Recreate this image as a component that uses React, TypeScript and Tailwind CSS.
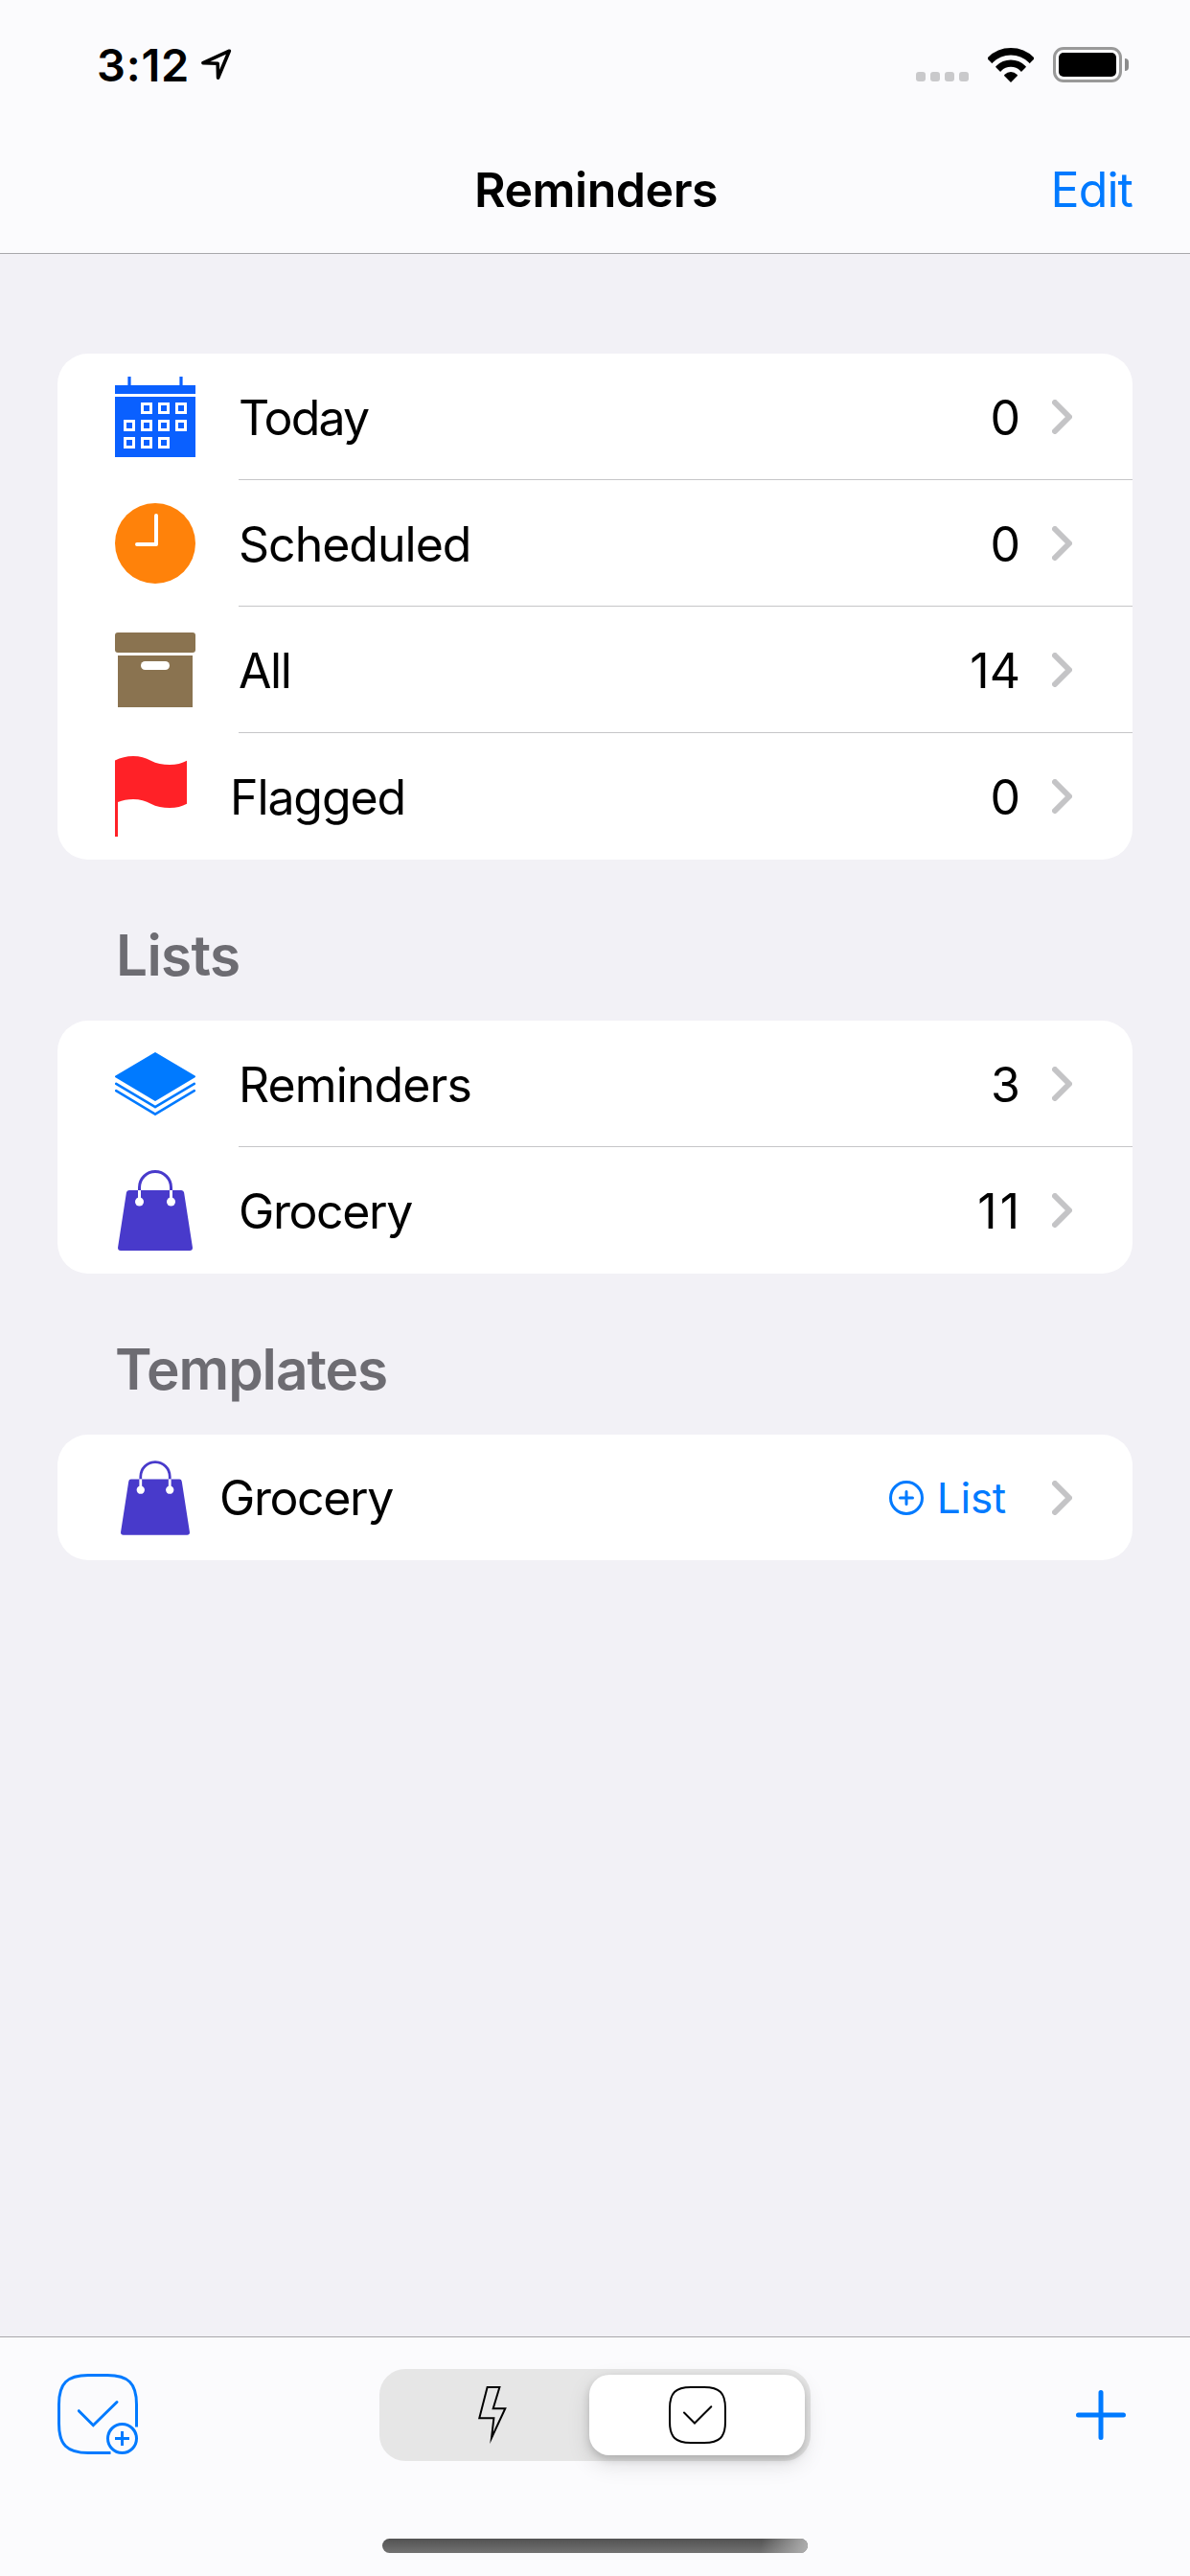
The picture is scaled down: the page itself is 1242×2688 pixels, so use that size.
import React from "react";
import type { ReactNode } from "react";

const CalendarIcon = () => {
  const days: [number, number][] = [
    [27, 27], [45, 27], [63, 27],
    [9, 45], [27, 45], [45, 45], [63, 45],
    [9, 63], [27, 63], [45, 63],
  ];
  return (
    <svg width="84" height="84" viewBox="0 0 84 84">
      <g fill="#0a60ff">
        <rect x="13.4" y="0" width="3.2" height="9" />
        <rect x="67.4" y="0" width="3.2" height="9" />
        <rect x="0" y="9" width="84" height="9" />
        <rect x="0" y="21" width="84" height="63" />
      </g>
      <g fill="none" stroke="#fff" strokeWidth="3">
        {days.map(([x, y]) => (
          <rect key={`${x}-${y}`} x={x + 1.5} y={y + 1.5} width="9" height="9" />
        ))}
      </g>
    </svg>
  );
};

const ClockIcon = () => (
  <svg width="84" height="84" viewBox="0 0 84 84">
    <circle cx="42" cy="42" r="42" fill="#ff820a" />
    <path d="M43 13V43H23" fill="none" stroke="#fff" strokeWidth="4" strokeLinecap="round" strokeLinejoin="round" />
  </svg>
);

const BoxIcon = () => (
  <svg width="84" height="78" viewBox="0 0 84 78">
    <rect width="84" height="21" rx="3" fill="#8a7350" />
    <rect x="3" y="24" width="78" height="54" fill="#8a7350" />
    <rect x="27" y="30" width="30" height="9" rx="4.5" fill="#fff" />
  </svg>
);

const FlagIcon = () => (
  <svg width="75" height="84" viewBox="0 0 75 84">
    <path
      fill="#ff2127"
      d="M0 4.5C6 1.5 12 0 19 0C26 0 32 1.8 37.5 4.7C43 7.6 50 9 57 9C64 9 70 7.5 75 4.7V49.7C70 52.5 64 54 57 54C50 54 43 52.6 37.5 49.7C32 46.8 26 45 19 45C13 45 8 46 3 48V84H0Z"
    />
  </svg>
);

const LayersIcon = () => (
  <svg width="84" height="66" viewBox="0 0 84 66">
    <path d="M42 1L83 25.3L42 50L1 25.3Z" fill="#007aff" stroke="#007aff" strokeWidth="2" strokeLinejoin="round" />
    <path
      d="M1.2 32.8L42 57.2L82.8 32.8M1.2 40.2L42 64.6L82.8 40.2"
      fill="none"
      stroke="#007aff"
      strokeWidth="2.6"
      strokeLinecap="round"
      strokeLinejoin="round"
    />
  </svg>
);

const BagIcon = ({ width = 78, height = 84 }: { width?: number; height?: number }) => (
  <svg width={width} height={height} viewBox="0 0 78 84">
    <path d="M22.5 21V18A16.5 16.5 0 0 1 55.5 18V21" fill="none" stroke="#483acb" strokeWidth="3" />
    <path d="M11.7 21H66.3Q68.8 21 69.1 23.5L78 81Q78 84 75 84H3Q0 84 0 81L8.9 23.5Q9.2 21 11.7 21Z" fill="#483acb" />
    <path d="M22.5 21V33M55.5 21V33" stroke="#fff" strokeWidth="3" />
    <circle cx="22.5" cy="33" r="4.5" fill="#fff" />
    <circle cx="55.5" cy="33" r="4.5" fill="#fff" />
  </svg>
);

const Chevron = () => (
  <svg width="21" height="36" viewBox="0 0 21 36" className="mr-[63px] shrink-0">
    <path d="M3 3L18 18L3 33" fill="none" stroke="#c4c4c6" strokeWidth="6" strokeLinecap="round" strokeLinejoin="round" />
  </svg>
);

const LocationIcon = () => (
  <svg width="32" height="33" viewBox="0 0 32 33" className="mb-[2px] ml-[12px]">
    <path d="M29.3 2.2L2 14.7L17.2 15.2L17.6 30.2Z" fill="none" stroke="#000" strokeWidth="3.6" strokeLinejoin="round" />
  </svg>
);

const WifiIcon = () => (
  <svg width="48" height="36" viewBox="0 0 48 36" className="mb-px ml-[20px]">
    <clipPath id="wifi-wedge">
      <path d="M24 36L-6 5.6V-2H54V5.6Z" />
    </clipPath>
    <g clipPath="url(#wifi-wedge)">
      <circle cx="24" cy="34" r="30.3" fill="none" stroke="#000" strokeWidth="7.4" />
      <circle cx="24" cy="34" r="17.8" fill="none" stroke="#000" strokeWidth="7.2" />
      <circle cx="24" cy="34" r="9" />
    </g>
  </svg>
);

const BatteryIcon = () => (
  <div className="mb-px ml-[20px] flex items-center gap-[3px]">
    <div className="h-[37px] w-[72px] rounded-[11px] border-[3px] border-[#999999] p-[3px]">
      <div className="h-full w-full rounded-[5px] bg-black" />
    </div>
    <div className="h-[13px] w-[4px] rounded-r-full bg-[#8c8c8c]" />
  </div>
);

const AddReminderIcon = () => (
  <svg width="84" height="84" viewBox="0 0 84 84" fill="none" stroke="#007aff" strokeWidth="3">
    <path d="M82.5 55.5V32C82.5 10 74 1.5 52 1.5H32C10 1.5 1.5 10 1.5 32V52C1.5 74 10 82.5 32 82.5H55.5" />
    <path d="M22.3 38.7L37.3 53.7L62 29.5" strokeLinecap="round" />
    <circle cx="67.5" cy="67.5" r="15" />
    <path d="M60 67.5H75M67.5 60V75" />
  </svg>
);

const CheckSquareIcon = () => (
  <svg width="60" height="60" viewBox="0 0 60 60" fill="none" stroke="#000" strokeWidth="2">
    <path d="M23 1H37C53 1 59 7 59 23V37C59 53 53 59 37 59H23C7 59 1 53 1 37V23C1 7 7 1 23 1Z" />
    <path d="M16 27.5L27 38.5L44.3 21.2" strokeLinecap="round" />
  </svg>
);

const BoltIcon = () => (
  <svg width="30" height="60" viewBox="0 0 30 60">
    <path
      d="M9.6 1H22.4L15.7 23.2H28.3L14 54L16.4 33.3H1.3Z"
      fill="none"
      stroke="#000"
      strokeWidth="2"
      strokeMiterlimit="12"
    />
  </svg>
);

const PlusIcon = () => (
  <svg width="52" height="52" viewBox="0 0 52 52">
    <path d="M26 2.5V49.5M2.5 26H49.5" stroke="#007aff" strokeWidth="5" strokeLinecap="round" />
  </svg>
);

const PlusCircleIcon = () => (
  <svg width="36" height="36" viewBox="0 0 36 36" fill="none" stroke="#007aff" strokeWidth="3">
    <circle cx="18" cy="18" r="16.5" />
    <path d="M11.5 18H24.5M18 11.5V24.5" strokeLinecap="round" />
  </svg>
);

type RowProps = {
  icon: ReactNode;
  label: ReactNode;
  count: ReactNode;
  last?: boolean;
};

const Row = ({ icon, label, count, last }: RowProps) => (
  <div className="flex h-[132px] items-center pl-[60px]">
    {icon}
    <div className={`ml-[45px] flex h-full flex-1 items-center ${last ? "" : "border-b border-[#c6c6c8]"}`}>
      <div className="flex-1 pt-[2px]">{label}</div>
      <div className="mr-[33px] pt-[2px]">{count}</div>
      <Chevron />
    </div>
  </div>
);

const Card = ({ children }: { children: ReactNode }) => (
  <section className="mx-[60px] rounded-[32px] bg-white">{children}</section>
);

export default function App() {
  return (
    <div className="flex h-[2688px] w-[1242px] flex-col bg-[#f2f1f6] font-[Inter,sans-serif] text-[50px] leading-none text-black">
      <header className="h-[265px] border-b border-[#a8a8ab] bg-[#fbfbfd]">
        <div className="flex h-[136px] items-center pr-[64px] pl-[101px]">
          <span className="pb-[2px] text-[47px] font-semibold tracking-[0.75px]">3:12</span>
          <LocationIcon />
          <div className="mt-[24px] ml-auto flex gap-[5px]">
            <div className="size-[10px] rounded-[3px] bg-[#c9c9cb]" />
            <div className="size-[10px] rounded-[3px] bg-[#c9c9cb]" />
            <div className="size-[10px] rounded-[3px] bg-[#c9c9cb]" />
            <div className="size-[10px] rounded-[3px] bg-[#c9c9cb]" />
          </div>
          <WifiIcon />
          <BatteryIcon />
        </div>
        <div className="grid h-[124px] grid-cols-[1fr_auto_1fr] items-center pr-[60px] pl-[62px]">
          <span />
          <h1 className="font-semibold tracking-[-0.48px]">Reminders</h1>
          <span className="justify-self-end tracking-[-0.93px] text-[#007aff]">Edit</span>
        </div>
      </header>

      <main className="flex-1 pt-[104px]">
        <Card>
          <Row icon={<CalendarIcon />} label={<span className="tracking-[-1.8px]">Today</span>} count="0" />
          <Row icon={<ClockIcon />} label={<span className="tracking-[-1px]">Scheduled</span>} count="0" />
          <Row icon={<BoxIcon />} label={<span className="tracking-[-1.4px]">All</span>} count="14" />
          <Row icon={<FlagIcon />} label={<span className="tracking-[-1.11px]">Flagged</span>} count="0" last />
        </Card>

        <h2 className="flex h-[168px] items-center pt-[32px] pl-[121px] text-[58.5px] font-semibold tracking-[-0.67px] text-[#6d6c72]">
          Lists
        </h2>
        <Card>
          <Row icon={<LayersIcon />} label={<span className="tracking-[-0.89px]">Reminders</span>} count="3" />
          <Row
            icon={<div className="flex w-[84px] justify-center"><BagIcon /></div>}
            label={<span className="tracking-[-1.4px]">Grocery</span>}
            count={<span className="mr-[-2px] tracking-[3px]">11</span>}
            last
          />
        </Card>

        <h2 className="flex h-[168px] items-center pt-[32px] pl-[120px] text-[58.5px] font-semibold tracking-[-1.05px] text-[#6d6c72]">
          Templates
        </h2>
        <Card>
          <div className="flex h-[131px] items-center pl-[66px]">
            <BagIcon width={72} height={78} />
            <span className="ml-[31px] flex-1 tracking-[-1.4px]">Grocery</span>
            <PlusCircleIcon />
            <span className="mr-[48px] ml-[14px] text-[44px] tracking-[-0.25px] text-[#007aff]">List</span>
            <Chevron />
          </div>
        </Card>
      </main>

      <footer className="h-[250px] border-t border-[#a8a8ab] bg-[#fbfbfd] pt-[33px]">
        <div className="grid h-[96px] grid-cols-[1fr_450px_1fr] items-center">
          <div className="pb-[2px] pl-[60px]">
            <AddReminderIcon />
          </div>
          <div className="flex h-[96px] rounded-[27px] bg-[#e6e6e6] p-[6px]">
            <div className="flex flex-1 items-center justify-center pl-[11px]">
              <BoltIcon />
            </div>
            <div className="flex w-[225px] items-center justify-center rounded-[21px] bg-white shadow-[0_4px_8px_rgba(0,0,0,0.16),0_9px_24px_rgba(0,0,0,0.12)]">
              <CheckSquareIcon />
            </div>
          </div>
          <div className="justify-self-end pr-[67px]">
            <PlusIcon />
          </div>
        </div>
        <div className="mx-auto mt-[81px] h-[15px] w-[444px] overflow-hidden rounded-full bg-linear-to-b from-[#525252] to-[#727272]">
          <div className="ml-auto h-full w-[60px] bg-[linear-gradient(100deg,transparent_20%,#b0b0b0)]" />
        </div>
      </footer>
    </div>
  );
}
